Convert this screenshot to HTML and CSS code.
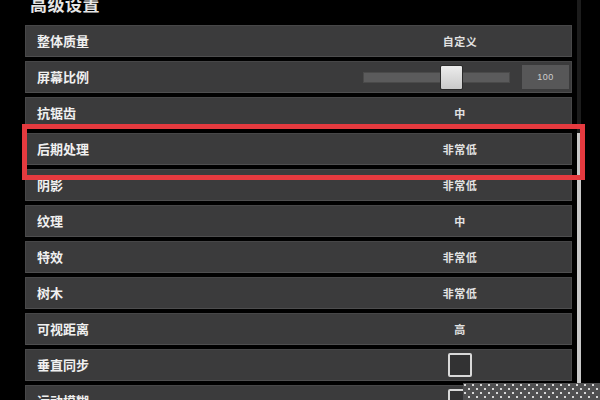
FILE: index.html
```html
<!DOCTYPE html>
<html lang="zh">
<head>
<meta charset="utf-8">
<link rel="stylesheet" href="styles.css">
</head>
<body>
<div class="screen">
  <div class="main">
    <div class="header"><h1 class="title">高级设置</h1></div>
    <div class="rows">
      <div class="row"><span class="label">整体质量</span><span class="value">自定义</span></div>
      <div class="row"><span class="label">屏幕比例</span>
        <div class="value slider-cell">
          <div class="track"><div class="knob"></div></div>
          <div class="numbox">100</div>
        </div>
      </div>
      <div class="row"><span class="label">抗锯齿</span><span class="value">中</span></div>
      <div class="row"><span class="label">后期处理</span><span class="value">非常低</span></div>
      <div class="row"><span class="label">阴影</span><span class="value">非常低</span></div>
      <div class="row"><span class="label">纹理</span><span class="value">中</span></div>
      <div class="row"><span class="label">特效</span><span class="value">非常低</span></div>
      <div class="row"><span class="label">树木</span><span class="value">非常低</span></div>
      <div class="row"><span class="label">可视距离</span><span class="value">高</span></div>
      <div class="row"><span class="label">垂直同步</span><span class="value"><span class="checkbox"></span></span></div>
      <div class="row"><span class="label">运动模糊</span><span class="value"><span class="checkbox"></span></span></div>
    </div>
  </div>
  <div class="scrollbar"><div class="scroll-thumb"></div></div>
  <div class="highlight"></div>
  <div class="noise"></div>
</div>
</body>
</html>
```
FILE: styles.css
```css
html, body {
  margin: 0;
  padding: 0;
  background: #000;
}
body {
  width: 600px;
  height: 400px;
  overflow: hidden;
  font-family: "Noto Sans CJK SC", "Noto Sans", sans-serif;
}
.screen {
  position: relative;
  width: 600px;
  height: 400px;
  display: flex;
  overflow: hidden;
}
.main {
  width: 547px;
  padding-left: 25px;
}
.header {
  display: flow-root;
  height: 25px;
}
.title {
  margin: -5px 0 0 5px;
  font-size: 17px;
  line-height: 18px;
  font-weight: 700;
  color: #e6e6e6;
  letter-spacing: 0.5px;
}
.rows {
  display: flex;
  flex-direction: column;
  gap: 4px;
}
.row {
  flex: none;
  height: 32px;
  box-sizing: border-box;
  display: grid;
  grid-template-columns: 323px 1fr;
  align-items: center;
  background: #3b3b3c;
  border: 1px solid #474748;
  border-bottom-color: #4e4e4f;
}
.label {
  padding-left: 11px;
  font-size: 13px;
  font-weight: 700;
  color: #f0f0f0;
  line-height: 16px;
}
.value {
  display: flex;
  justify-content: center;
  align-items: center;
  font-size: 11px;
  font-weight: 700;
  color: #e2e2e2;
  line-height: 14px;
  letter-spacing: 0.5px;
}
.slider-cell {
  justify-content: flex-start;
  padding-left: 14px;
}
.track {
  position: relative;
  width: 147px;
  height: 11px;
  background: #5b5b5c;
  border: 1px solid #4a4a4a;
  box-sizing: border-box;
}
.knob {
  position: absolute;
  left: 76px;
  top: -8px;
  width: 23px;
  height: 25px;
  box-sizing: border-box;
  background: linear-gradient(#ececec, #c9c9c9);
  border: 1px solid #2a2a2a;
  border-radius: 2px;
}
.numbox {
  margin-left: 12px;
  width: 47px;
  height: 24px;
  background: #575758;
  color: #cfcfcf;
  font-size: 9px;
  font-weight: 400;
  display: flex;
  align-items: center;
  justify-content: center;
  font-family: "Liberation Sans", sans-serif;
}
.checkbox {
  width: 24px;
  height: 24px;
  box-sizing: border-box;
  border: 2px solid #d9d9d9;
  border-radius: 2px;
  background: #323233;
}
.scrollbar {
  margin-left: 5px;
  width: 4px;
  height: 400px;
  background: #1c1c1c;
  padding-top: 133px;
  box-sizing: border-box;
}
.scroll-thumb {
  height: 300px;
  background: #c8c8c8;
}
.highlight {
  position: absolute;
  left: 22px;
  top: 124px;
  width: 563px;
  height: 56px;
  box-sizing: border-box;
  border: 5px solid #e53a3f;
}
.noise {
  position: absolute;
  left: 463px;
  top: 383px;
  width: 137px;
  height: 17px;
  background-color: #505051;
  background-image:
    radial-gradient(circle at 2px 2px, #d8d8d8 0.8px, transparent 1.1px),
    radial-gradient(circle at 6px 6px, #d8d8d8 0.8px, transparent 1.1px);
  background-size: 8px 8px;
}
```
